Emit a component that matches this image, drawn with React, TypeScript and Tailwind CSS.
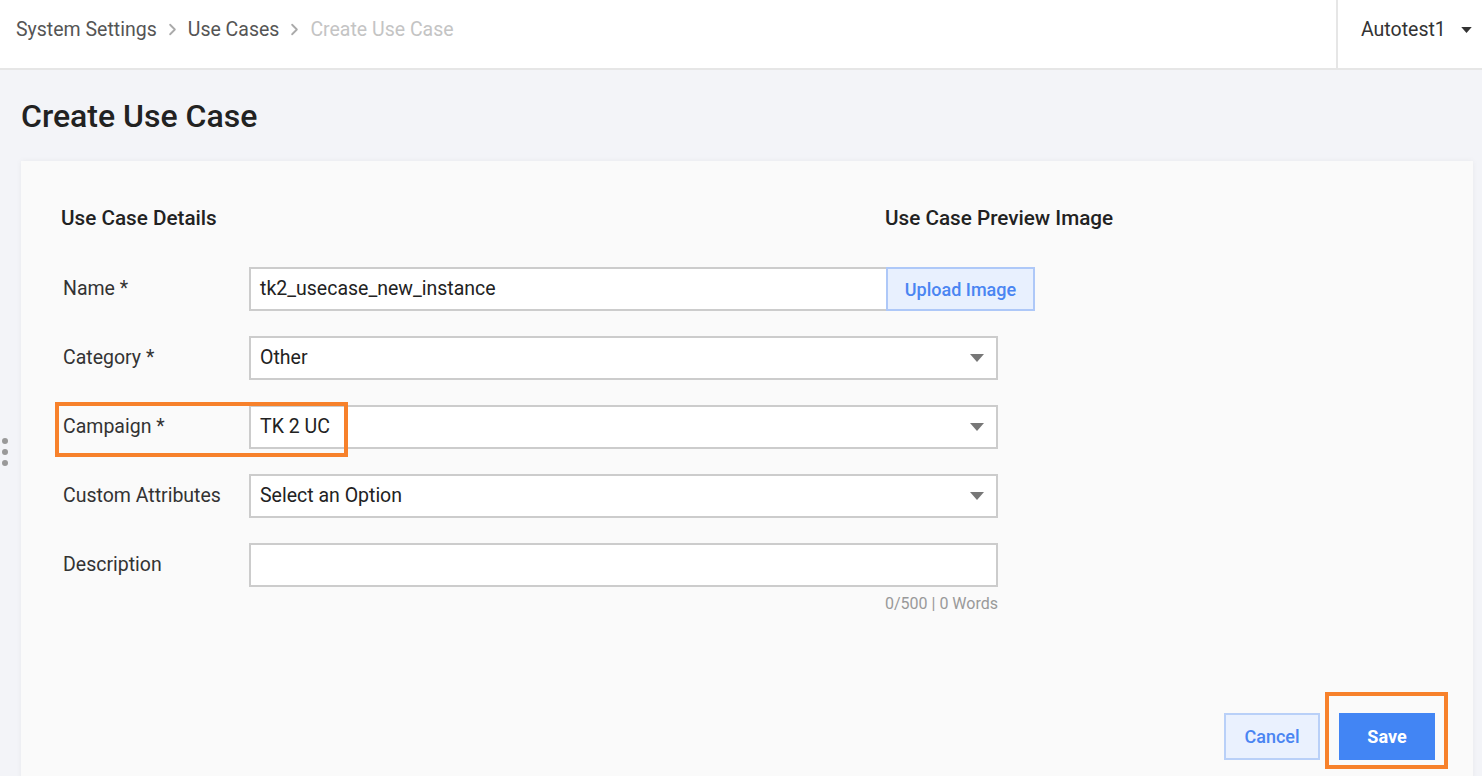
import { ChevronRight } from 'lucide-react';

function Caret({ className = '' }: { className?: string }) {
  return (
    <svg width="14" height="8" viewBox="0 0 14 8" className={className}>
      <path d="M0 0 L14 0 L7 8 Z" fill="currentColor" />
    </svg>
  );
}

function Field({ label, children }: { label: string; children: React.ReactNode }) {
  return (
    <div className="flex items-center h-[44px]">
      <div className="w-[188px] pl-[2px] text-[19.5px] text-[#333]">{label}</div>
      {children}
    </div>
  );
}

function Select({ value }: { value: string }) {
  return (
    <div className="w-[749px] h-[44px] bg-white border-2 border-[#cccccc] flex items-center justify-between pl-[9px] pr-[12px]">
      <span className="text-[19.5px] text-[#222]">{value}</span>
      <Caret className="text-[#777]" />
    </div>
  );
}

export default function App() {
  return (
    <div className="min-h-screen bg-[#f3f4f8] relative overflow-hidden" style={{ fontFamily: 'Roboto, "Liberation Sans", sans-serif' }}>
      {/* Header */}
      <header className="h-[70px] bg-white border-b-2 border-[#e6e6e6] flex items-stretch">
        <nav className="flex-1 flex items-center pl-[16px] text-[19.5px] pb-[9px]">
          <span className="text-[#555]">System Settings</span>
          <ChevronRight className="size-[19px] mx-[6px] text-[#aaa]" strokeWidth={2.25} />
          <span className="text-[#555]">Use Cases</span>
          <ChevronRight className="size-[19px] mx-[6px] text-[#aaa]" strokeWidth={2.25} />
          <span className="text-[#c4c4c4]">Create Use Case</span>
        </nav>
        <div className="w-[146px] border-l-2 border-[#e6e6e6] flex items-center pl-[23px] pb-[9px]">
          <span className="text-[19.5px] text-[#333]">Autotest1</span>
          <Caret className="ml-[15px] text-[#333] w-[11px] h-[6px]" />
        </div>
      </header>

      {/* Drag handle */}
      <div className="absolute left-[2px] top-[438px] flex flex-col gap-[5px]">
        <span className="size-[6px] rounded-full bg-[#999]" />
        <span className="size-[6px] rounded-full bg-[#999]" />
        <span className="size-[6px] rounded-full bg-[#999]" />
      </div>

      <main className="pl-[21px] pr-[9px]">
        <h1 className="pt-[28px] text-[32px] font-medium text-[#222] leading-[36px]">Create Use Case</h1>

        <section className="mt-[27px] bg-[#fafafa] pl-[40px] pr-[38px] pt-[45px] pb-[20px] shadow-[0_0_6px_rgba(0,0,0,0.05)]">
          <div className="flex text-[20.7px] font-medium text-[#222] leading-[24px]">
            <div className="w-[824px]">Use Case Details</div>
            <div>Use Case Preview Image</div>
          </div>

          <div className="mt-[37px] flex flex-col gap-[25px]">
            <Field label="Name *">
              <div className="w-[637px] h-[44px] bg-white border-2 border-r-0 border-[#cccccc] flex items-center pl-[9px] text-[19.5px] text-[#222]">
                tk2_usecase_new_instance
              </div>
              <button className="w-[149px] h-[44px] bg-[#e8f0fe] border-2 border-[#aec8f8] text-[18px] font-medium text-[#4a85f2]">
                Upload Image
              </button>
            </Field>
            <Field label="Category *">
              <Select value="Other" />
            </Field>
            <div className="relative">
              <Field label="Campaign *">
                <Select value="TK 2 UC" />
              </Field>
              <div className="absolute top-[-3px] left-[-6px] w-[293px] h-[55px] border-[4px] border-[#f7812b]" />
            </div>
            <Field label="Custom Attributes">
              <Select value="Select an Option" />
            </Field>
            <Field label="Description">
              <div className="w-[749px] h-[44px] bg-white border-2 border-[#cccccc]" />
            </Field>
          </div>
          <div className="w-[937px] text-right mt-[5px] text-[16px] text-[#999]">0/500 | 0 Words</div>

          <div className="mt-[97px] flex justify-end gap-[19px]">
            <button className="w-[96px] h-[47px] bg-[#eaf1fe] border-2 border-[#b9d0f8] text-[18px] font-medium text-[#4a85f2]">
              Cancel
            </button>
            <div className="relative">
              <button className="w-[96px] h-[47px] bg-[#4285f4] text-[18px] font-bold text-white">Save</button>
              <div className="absolute top-[-21px] left-[-14px] right-[-13px] bottom-[-9px] border-[4px] border-[#f7812b]" />
            </div>
          </div>
        </section>
      </main>
    </div>
  );
}
